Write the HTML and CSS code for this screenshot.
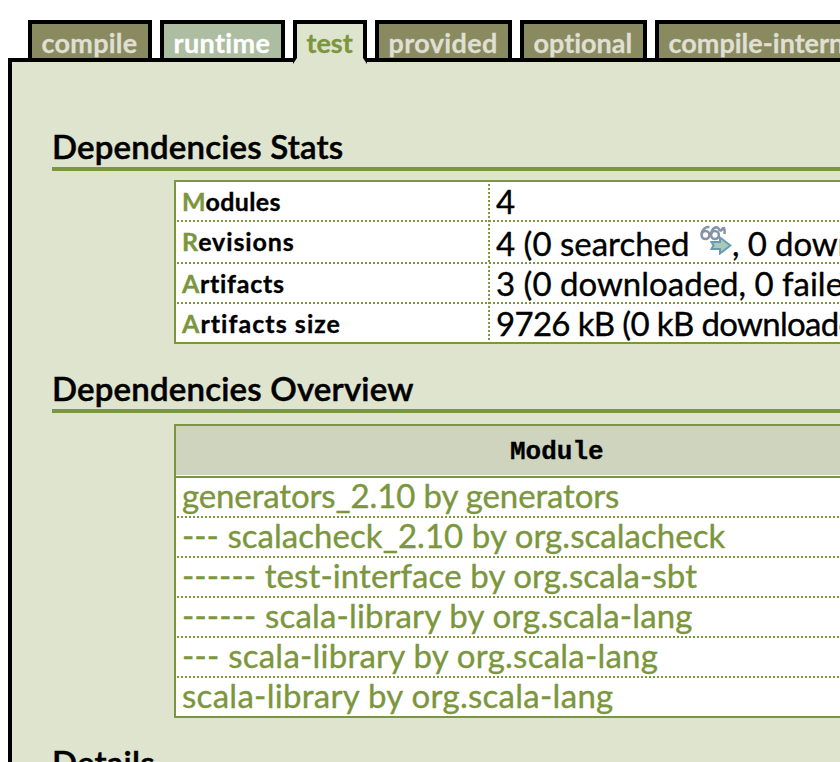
FILE: index.html
```
<!DOCTYPE html>
<html lang="en">
<head>
<meta charset="utf-8">
<title>Ivy report</title>
<link rel="stylesheet" href="styles.css">
</head>
<body>
<ul class="tabs">
  <li class="tab w-compile">compile</li>
  <li class="tab hover w-runtime">runtime</li>
  <li class="tab active w-test">test</li>
  <li class="tab w-provided">provided</li>
  <li class="tab w-optional">optional</li>
  <li class="tab">compile-internal</li>
</ul>
<main class="panel">
  <h2 class="stats-title">Dependencies Stats</h2>
  <div class="table stats">
    <div class="row"><div class="label l1">Modules</div><div class="value">4</div></div>
    <div class="row tall"><div class="label l2">Revisions</div><div class="value">4 (0 searched <svg class="icon" viewBox="0 0 32 30" width="32" height="30"><g fill="none" stroke="#8793a8" stroke-width="2.6"><ellipse cx="5.500" cy="10" rx="3.900" ry="4"/><ellipse cx="15" cy="10" rx="3.900" ry="4"/><path d="M1.700 9C2 5 5 1.500 9.500 2M11.200 9C11.500 5 14 1.500 17.500 2.500C20 4 18.500 6 21 5.500C22.500 5 22 2.500 24 3Q25 5 24.500 9"/></g><path d="M11.500 17H20V12.500L30.500 20.500L20 28.500V24H11.500L13.500 20.500Z" fill="#a6cbbd" stroke="#6b9ab2" stroke-width="2"/></svg><span class="after">, 0 downloaded)</span></div></div>
    <div class="row"><div class="label l3">Artifacts</div><div class="value">3 (0 downloaded, 0 failed)</div></div>
    <div class="row last"><div class="label l4">Artifacts size</div><div class="value v4">9726 kB (0 kB downloaded)</div></div>
  </div>
  <h2>Dependencies Overview</h2>
  <div class="table overview">
    <div class="head">Module</div>
    <div class="row m1">generators_2.10 by generators</div>
    <div class="row m2">--- scalacheck_2.10 by org.scalacheck</div>
    <div class="row m3">------ test-interface by org.scala-sbt</div>
    <div class="row m4">------ scala-library by org.scala-lang</div>
    <div class="row m5">--- scala-library by org.scala-lang</div>
    <div class="row m6 last">scala-library by org.scala-lang</div>
  </div>
  <h2>Details</h2>
</main>
</body>
</html>
```
FILE: styles.css
```
* { box-sizing: border-box; }
html, body { height: 100%; }
body {
  margin: 0;
  padding: 20px 0 0 8px;
  background: #fff;
  color: #000;
  overflow: hidden;
  font-family: Lato, sans-serif;
  font-variant-ligatures: none;
  font-kerning: normal;
}

.tabs {
  display: flex;
  gap: 8px;
  width: 1100px;
  height: 38px;
  margin: 0;
  padding: 0 0 0 20px;
  list-style: none;
}
.tab {
  flex: none;
  height: 38px;
  padding: 0 9.5px;
  border: 4px solid #000;
  border-bottom: 0;
  background: #8a8a60;
  color: #dfdfd2;
  font-size: 27px;
  font-weight: 700;
  line-height: 37px;
  white-space: nowrap;
  -webkit-text-stroke: .3px currentColor;
}
.tab.hover { background: #adbda1; color: #fff; }
.tab.active {
  position: relative;
  z-index: 1;
  height: 44px;
  border-bottom: 6px solid #dfe4ce;
  background: #dfe4ce;
  color: #7b963c;
}
.w-compile { width: 124px; letter-spacing: .25px; }
.w-runtime { width: 125px; letter-spacing: .35px; }
.w-test { width: 74px; }
.w-provided { width: 137px; letter-spacing: .35px; }
.w-optional { width: 127px; }

.panel {
  height: calc(100vh - 58px);
  padding: 65px 0 0 40px;
  border-top: 4px solid #000;
  border-left: 4px solid #000;
  background: #dfe4ce;
  overflow: hidden;
}
h2 {
  height: 44px;
  margin: 25px 0 0;
  border-bottom: 4px solid #7b963c;
  font-size: 33px;
  font-weight: 600;
  line-height: 39px;
  letter-spacing: .18px;
  white-space: nowrap;
  -webkit-text-stroke: .5px currentColor;
}
h2.stats-title { margin-top: 0; }

.table {
  width: 1000px;
  margin-left: 122px;
  border: 2px solid #7b963c;
  background: #fff;
  font-size: 33px;
  white-space: nowrap;
  -webkit-text-stroke: .35px currentColor;
}
.stats { margin-top: 9px; }
.overview { margin-top: 11px; color: #7b963c; }
.row {
  display: flex;
  height: 40px;
  padding-left: 6px;
  line-height: 39px;
  background: repeating-linear-gradient(90deg, #7b963c 0 2px, #fff 2px 4px) 1px 100% / 100% 2px no-repeat;
}
.overview .row { line-height: 35px; }
.row.tall { height: 42px; line-height: 42px; }
.row.last { height: 38px; background: none; }
.label {
  width: 306px;
  font-size: 25px;
  font-weight: 700;
}
.tall .label { line-height: 39px; }
.label::first-letter { color: #7b963c; }
.l1 { letter-spacing: .35px; }
.l2 { letter-spacing: .9px; }
.l3 { letter-spacing: .7px; }
.l4 { letter-spacing: 1.05px; }
.value {
  padding-left: 8px;
  background: repeating-linear-gradient(180deg, transparent 0 2px, #7b963c 2px 4px) 0 0 / 2px 100% no-repeat;
}
.v4 { letter-spacing: -.7px; word-spacing: .2px; }
.after { letter-spacing: -.1px; }
.icon { margin: 0 0 0 2px; vertical-align: 1px; }
.head {
  height: 52px;
  padding-left: 334px;
  border-bottom: 2px solid #7b963c;
  background: #cfd4be;
  box-shadow: inset 0 -1px #fff;
  color: #000;
  font: 700 26px/52px "Liberation Mono", monospace;
}
.m1 { letter-spacing: -.13px; }
.m2 { letter-spacing: .05px; }
.m3 { letter-spacing: .1px; }
.m4 { letter-spacing: .16px; }
.m5 { letter-spacing: .24px; }
.m6 { letter-spacing: .29px; }
```
